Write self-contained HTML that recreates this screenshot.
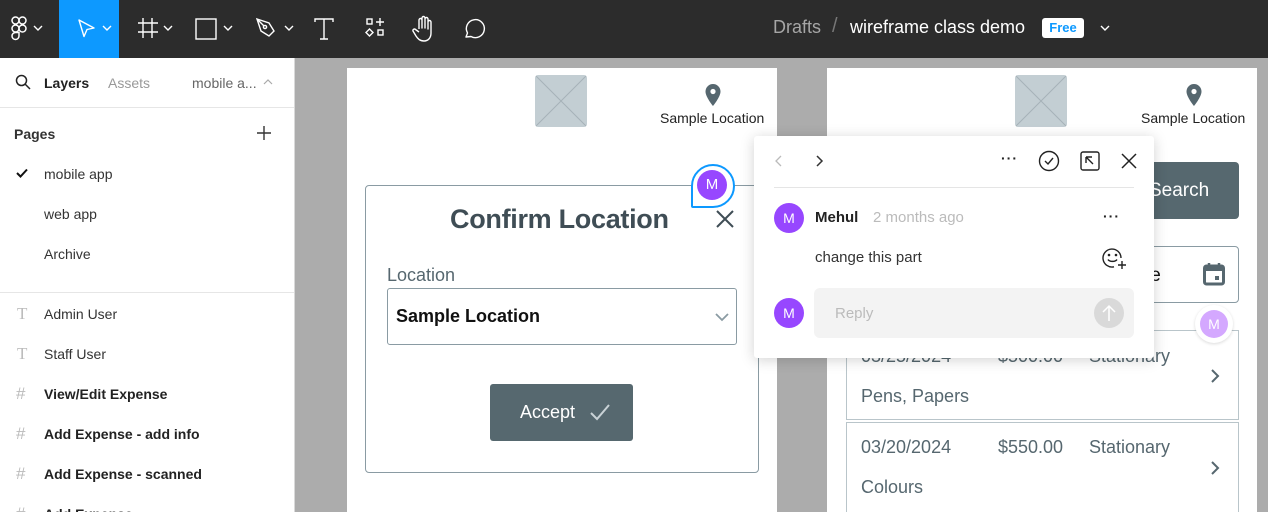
<!DOCTYPE html>
<html><head><meta charset="utf-8"><style>
*{margin:0;padding:0;box-sizing:border-box}
html,body{width:1268px;height:512px;overflow:hidden}
body{position:relative;background:#acacac;font-family:"Liberation Sans",sans-serif}
.a{position:absolute}
.top{left:0;top:0;width:1268px;height:58px;background:#2c2c2c}
.side{left:0;top:58px;width:295px;height:454px;background:#fff;border-right:1px solid #d9d9d9;overflow:hidden}
.side .t{font-size:14px;color:#333}
.b{font-weight:bold;color:#222}
.frame{background:#fff}
.rob{font-family:"Liberation Sans",sans-serif;color:#333}
svg{display:block}
</style></head><body>
<div class="a top">
 <svg class="a" style="left:10px;top:16px" width="18" height="26" viewBox="0 0 18 26" fill="none" stroke="#fff" stroke-width="1.5"><rect x="2" y="1" width="7" height="7" rx="3.5"/><rect x="9" y="1" width="7" height="7" rx="3.5"/><rect x="2" y="9" width="7" height="7" rx="3.5"/><circle cx="12.5" cy="12.5" r="3.5"/><path d="M5.5 16.5a3.5 3.5 0 1 0 3.5 3.5v-3.5z"/></svg>
 <svg class="a" style="left:33px;top:24px" width="10" height="8" viewBox="0 0 10 8"><path d="M1 2l4 4 4-4" stroke="#fff" stroke-width="1.4" fill="none"/></svg>
 <div class="a" style="left:59px;top:0;width:60px;height:58px;background:#0d99ff"></div>
 <svg class="a" style="left:76px;top:18px" width="22" height="22" viewBox="0 0 22 22"><path d="M3 2l15 8-7 1.5-3 7z" stroke="#fff" stroke-width="1.4" fill="none" stroke-linejoin="round"/></svg>
 <svg class="a" style="left:102px;top:24px" width="10" height="8" viewBox="0 0 10 8"><path d="M1 2l4 4 4-4" stroke="#fff" stroke-width="1.4" fill="none"/></svg>
 <svg class="a" style="left:137px;top:17px" width="22" height="22" viewBox="0 0 22 22" stroke="#fff" stroke-width="1.4"><path d="M6 1v20M15 1v20M1 6h20M1 15h20"/></svg>
 <svg class="a" style="left:163px;top:24px" width="10" height="8" viewBox="0 0 10 8"><path d="M1 2l4 4 4-4" stroke="#fff" stroke-width="1.4" fill="none"/></svg>
 <svg class="a" style="left:195px;top:18px" width="22" height="22" viewBox="0 0 22 22"><rect x="1" y="1" width="20" height="20" stroke="#fff" stroke-width="1.4" fill="none"/></svg>
 <svg class="a" style="left:223px;top:24px" width="10" height="8" viewBox="0 0 10 8"><path d="M1 2l4 4 4-4" stroke="#fff" stroke-width="1.4" fill="none"/></svg>
 <svg class="a" style="left:255px;top:17px" width="22" height="22" viewBox="0 0 22 22" fill="none" stroke="#fff" stroke-width="1.4"><path d="M2 2l12 4 5 8-5 5-8-5z"/><circle cx="10" cy="10" r="1.6"/><path d="M2 2l7 7"/></svg>
 <svg class="a" style="left:284px;top:24px" width="10" height="8" viewBox="0 0 10 8"><path d="M1 2l4 4 4-4" stroke="#fff" stroke-width="1.4" fill="none"/></svg>
 <svg class="a" style="left:313px;top:17px" width="22" height="24" viewBox="0 0 22 24" fill="none" stroke="#fff" stroke-width="1.4"><path d="M2 5V2h18v3M11 2v20M7 22h8"/></svg>
 <svg class="a" style="left:365px;top:17px" width="22" height="22" viewBox="0 0 22 22" fill="none" stroke="#fff" stroke-width="1.4"><rect x="2" y="2" width="5" height="5"/><path d="M15 1v8M11 5h8"/><path d="M4.5 12l3.5 3.5-3.5 3.5-3.5-3.5z"/><rect x="13" y="13" width="5" height="5"/></svg>
 <svg class="a" style="left:412px;top:15px" width="24" height="28" viewBox="0 0 24 28" fill="none" stroke="#fff" stroke-width="1.4" stroke-linejoin="round"><path d="M7 14V5a1.5 1.5 0 0 1 3 0v8V3a1.5 1.5 0 0 1 3 0v10V4a1.5 1.5 0 0 1 3 0v10V7a1.5 1.5 0 0 1 3 0v11c0 5-3 8-7 8s-6-2-8-5l-3-5a1.5 1.5 0 0 1 2.5-1.5L7 17"/></svg>
 <svg class="a" style="left:462px;top:17px" width="24" height="24" viewBox="0 0 24 24" fill="none" stroke="#fff" stroke-width="1.4"><path d="M4 20l1.5-4A9 9 0 1 1 9 19.5z" stroke-linejoin="round"/></svg>
 <div class="a" style="left:773px;top:17px;font-size:18px;color:#a6a6a6">Drafts</div>
 <div class="a" style="left:832px;top:15px;font-size:20px;color:#777">/</div>
 <div class="a" style="left:850px;top:17px;font-size:18px;color:#fff">wireframe class demo</div>
 <div class="a" style="left:1042px;top:18px;width:42px;height:20px;background:#fff;border-radius:3px;color:#0d99ff;font-size:13px;font-weight:bold;text-align:center;line-height:20px">Free</div>
 <svg class="a" style="left:1100px;top:24px" width="10" height="8" viewBox="0 0 10 8"><path d="M1 2l4 4 4-4" stroke="#fff" stroke-width="1.4" fill="none"/></svg>
</div>

<div class="a side">
 <svg class="a" style="left:15px;top:16px" width="16" height="16" viewBox="0 0 16 16" fill="none" stroke="#222" stroke-width="1.5"><circle cx="6.5" cy="6.5" r="5"/><path d="M10 10l5 5"/></svg>
 <div class="a b" style="left:44px;top:17px;font-size:14px">Layers</div>
 <div class="a" style="left:108px;top:17px;font-size:14px;color:#999">Assets</div>
 <div class="a" style="left:192px;top:17px;font-size:14px;color:#666">mobile a...</div>
 <svg class="a" style="left:263px;top:20px" width="10" height="8" viewBox="0 0 10 8"><path d="M1 6l4-4 4 4" stroke="#aaa" stroke-width="1.2" fill="none"/></svg>
 <div class="a" style="left:0;top:49px;width:294px;height:1px;background:#e6e6e6"></div>
 <div class="a b" style="left:14px;top:68px;font-size:14px;color:#333">Pages</div>
 <svg class="a" style="left:256px;top:67px" width="16" height="16" viewBox="0 0 16 16" stroke="#333" stroke-width="1.4"><path d="M8 1v14M1 8h14"/></svg>
 <svg class="a" style="left:16px;top:110px" width="12" height="10" viewBox="0 0 12 10"><path d="M1 5l3.5 3.5L11 1.5" stroke="#111" stroke-width="2" fill="none"/></svg>
 <div class="a t" style="left:44px;top:108px">mobile app</div>
 <div class="a t" style="left:44px;top:148px">web app</div>
 <div class="a t" style="left:44px;top:188px">Archive</div>
 <div class="a" style="left:0;top:234px;width:294px;height:1px;background:#e6e6e6"></div>
 <div class="a" style="left:17px;top:246px;font-size:17px;color:#bbb;font-family:'Liberation Serif',serif">T</div>
 <div class="a t" style="left:44px;top:248px">Admin User</div>
 <div class="a" style="left:17px;top:286px;font-size:17px;color:#bbb;font-family:'Liberation Serif',serif">T</div>
 <div class="a t" style="left:44px;top:288px">Staff User</div>
 <div class="a" style="left:16px;top:326px;font-size:17px;color:#bbb">#</div>
 <div class="a b" style="left:44px;top:328px;font-size:14px">View/Edit Expense</div>
 <div class="a" style="left:16px;top:366px;font-size:17px;color:#bbb">#</div>
 <div class="a b" style="left:44px;top:368px;font-size:14px">Add Expense - add info</div>
 <div class="a" style="left:16px;top:406px;font-size:17px;color:#bbb">#</div>
 <div class="a b" style="left:44px;top:408px;font-size:14px">Add Expense - scanned</div>
 <div class="a" style="left:16px;top:446px;font-size:17px;color:#bbb">#</div>
 <div class="a b" style="left:44px;top:448px;font-size:14px">Add Expense</div>
</div>

<div class="a frame" style="left:347px;top:68px;width:430px;height:444px">
 <svg class="a" style="left:188px;top:7px" width="52" height="52" viewBox="0 0 52 52"><rect width="52" height="52" rx="3" fill="#c3ced3"/><path d="M1 1l50 50M51 1L1 51" stroke="#a6b2b8" stroke-width="1"/></svg>
 <svg class="a" style="left:357px;top:15px" width="18" height="26" viewBox="0 0 18 26"><path d="M9 1a7.5 7.5 0 0 0-7.5 7.5C1.5 14 9 23 9 23s7.5-9 7.5-14.5A7.5 7.5 0 0 0 9 1z" fill="#56676f"/><circle cx="9" cy="8.5" r="2.6" fill="#fff"/></svg>
 <div class="a rob" style="left:313px;top:42px;font-size:14px;color:#222">Sample Location</div>
 <div class="a" style="left:18px;top:117px;width:394px;height:288px;border:1px solid #8a9ba3;border-radius:4px"></div>
 <div class="a" style="left:103px;top:136px;font-size:27px;font-weight:bold;color:#3f4d55;letter-spacing:-0.3px">Confirm Location</div>
 <svg class="a" style="left:369px;top:142px" width="18" height="18" viewBox="0 0 18 18" stroke="#3f4d55" stroke-width="2"><path d="M1 1l16 16M17 1L1 17"/></svg>
 <div class="a" style="left:40px;top:197px;font-size:18px;color:#56676f">Location</div>
 <div class="a" style="left:40px;top:220px;width:350px;height:57px;border:1px solid #8a9ba3;border-radius:3px"></div>
 <div class="a" style="left:49px;top:238px;font-size:18px;font-weight:bold;color:#111">Sample Location</div>
 <svg class="a" style="left:368px;top:244px" width="14" height="10" viewBox="0 0 14 10"><path d="M1 2l6 6 6-6" stroke="#8a9ba3" stroke-width="1.8" fill="none"/></svg>
 <div class="a" style="left:143px;top:316px;width:143px;height:57px;background:#56686f;border-radius:3px"></div>
 <div class="a" style="left:173px;top:334px;font-size:18px;color:#fff">Accept</div>
 <svg class="a" style="left:242px;top:335px" width="22" height="18" viewBox="0 0 22 18"><path d="M2 10l6 6L20 2" stroke="#c9d2d6" stroke-width="2" fill="none"/></svg>
</div>
<div class="a" style="left:691px;top:164px;width:44px;height:44px;background:#fff;border:2px solid #0d99ff;border-radius:22px 22px 22px 2px"></div>
<div class="a" style="left:697px;top:170px;width:30px;height:30px;border-radius:50%;background:#9747ff;color:#fff;font-size:15px;text-align:center;line-height:30px">M</div>

<div class="a frame" style="left:827px;top:68px;width:430px;height:444px">
 <svg class="a" style="left:188px;top:7px" width="52" height="52" viewBox="0 0 52 52"><rect width="52" height="52" rx="3" fill="#c3ced3"/><path d="M1 1l50 50M51 1L1 51" stroke="#a6b2b8" stroke-width="1"/></svg>
 <svg class="a" style="left:358px;top:15px" width="18" height="26" viewBox="0 0 18 26"><path d="M9 1a7.5 7.5 0 0 0-7.5 7.5C1.5 14 9 23 9 23s7.5-9 7.5-14.5A7.5 7.5 0 0 0 9 1z" fill="#56676f"/><circle cx="9" cy="8.5" r="2.6" fill="#fff"/></svg>
 <div class="a rob" style="left:314px;top:42px;font-size:14px;color:#222">Sample Location</div>
 <div class="a" style="left:300px;top:94px;width:112px;height:57px;background:#56686f;border-radius:4px"></div>
 <div class="a" style="left:322px;top:112px;font-size:19px;color:#fff">Search</div>
 <div class="a" style="left:300px;top:178px;width:112px;height:57px;border:1px solid #8a9ba3;border-radius:4px"></div>
 <div class="a" style="left:318px;top:197px;font-size:19px;color:#111">te</div>
 <svg class="a" style="left:376px;top:194px" width="22" height="24" viewBox="0 0 22 24"><rect x="1.5" y="4" width="19" height="18" rx="2" fill="none" stroke="#56676f" stroke-width="3"/><rect x="1.5" y="4" width="19" height="5" fill="#56676f"/><path d="M6 1v4M16 1v4" stroke="#56676f" stroke-width="2.5"/><rect x="12" y="14" width="4" height="4" fill="#56676f"/></svg>
 <div class="a" style="left:19px;top:262px;width:393px;height:90px;border:1px solid #b9c5ca"></div>
 <div class="a" style="left:19px;top:354px;width:393px;height:92px;border:1px solid #b9c5ca"></div>
 <div class="a" style="left:34px;top:278px;font-size:18px;color:#56676f">03/25/2024</div>
 <div class="a" style="left:171px;top:278px;font-size:18px;color:#56676f">$500.00</div>
 <div class="a" style="left:262px;top:278px;font-size:18px;color:#56676f">Stationary</div>
 <div class="a" style="left:34px;top:318px;font-size:18px;color:#56676f">Pens, Papers</div>
 <div class="a" style="left:34px;top:369px;font-size:18px;color:#56676f">03/20/2024</div>
 <div class="a" style="left:171px;top:369px;font-size:18px;color:#56676f">$550.00</div>
 <div class="a" style="left:262px;top:369px;font-size:18px;color:#56676f">Stationary</div>
 <div class="a" style="left:34px;top:409px;font-size:18px;color:#56676f">Colours</div>
 <svg class="a" style="left:383px;top:300px" width="10" height="16" viewBox="0 0 10 16"><path d="M2 2l6 6-6 6" stroke="#56676f" stroke-width="2" fill="none"/></svg>
 <svg class="a" style="left:383px;top:392px" width="10" height="16" viewBox="0 0 10 16"><path d="M2 2l6 6-6 6" stroke="#56676f" stroke-width="2" fill="none"/></svg>
</div>
<div class="a" style="left:1195px;top:305px;width:38px;height:38px;border-radius:50%;background:#fff;box-shadow:0 1px 3px rgba(0,0,0,.15)"></div>
<div class="a" style="left:1200px;top:310px;width:28px;height:28px;border-radius:50%;background:#d4a8ff;color:#fff;font-size:14px;text-align:center;line-height:28px">M</div>

<div class="a" style="left:754px;top:136px;width:400px;height:222px;background:#fff;border-radius:3px;box-shadow:0 2px 14px rgba(0,0,0,.18)">
 <svg class="a" style="left:20px;top:18px" width="10" height="14" viewBox="0 0 10 14"><path d="M7 2L2 7l5 5" stroke="#bbb" stroke-width="1.3" fill="none"/></svg>
 <svg class="a" style="left:60px;top:18px" width="10" height="14" viewBox="0 0 10 14"><path d="M3 2l5 5-5 5" stroke="#333" stroke-width="1.5" fill="none"/></svg>
 <div class="a" style="left:247px;top:14px;font-size:14px;color:#222;font-weight:bold;letter-spacing:1px">···</div>
 <svg class="a" style="left:284px;top:14px" width="22" height="22" viewBox="0 0 22 22" fill="none" stroke="#222" stroke-width="1.4"><circle cx="11" cy="11" r="9.5"/><path d="M7 11l3 3 5-6"/></svg>
 <svg class="a" style="left:325px;top:14px" width="22" height="22" viewBox="0 0 22 22" fill="none" stroke="#222" stroke-width="1.4"><rect x="2" y="2" width="18" height="18" rx="2"/><path d="M7 7l7 7M7 7v6M7 7h6"/></svg>
 <svg class="a" style="left:367px;top:17px" width="16" height="16" viewBox="0 0 16 16" stroke="#222" stroke-width="1.5"><path d="M1 1l14 14M15 1L1 15"/></svg>
 <div class="a" style="left:20px;top:51px;width:360px;height:1px;background:#e5e5e5"></div>
 <div class="a" style="left:20px;top:67px;width:30px;height:30px;border-radius:50%;background:#9747ff;color:#fff;font-size:14px;text-align:center;line-height:30px">M</div>
 <div class="a" style="left:61px;top:73px;font-size:15px;font-weight:bold;color:#222">Mehul</div>
 <div class="a" style="left:119px;top:73px;font-size:15px;color:#bbb">2 months ago</div>
 <div class="a" style="left:349px;top:72px;font-size:14px;color:#222;font-weight:bold;letter-spacing:1px">···</div>
 <div class="a" style="left:61px;top:113px;font-size:15px;color:#333">change this part</div>
 <svg class="a" style="left:348px;top:110px" width="26" height="26" viewBox="0 0 26 26" fill="none" stroke="#222" stroke-width="1.4"><path d="M19 12a9 9 0 1 0-7 8.8"/><circle cx="7" cy="9" r=".6" fill="#222"/><circle cx="14" cy="9" r=".6" fill="#222"/><path d="M6 13.5c1.5 2.5 7.5 2.5 9 0M20 15v8M16 19h8"/></svg>
 <div class="a" style="left:20px;top:162px;width:30px;height:30px;border-radius:50%;background:#9747ff;color:#fff;font-size:14px;text-align:center;line-height:30px">M</div>
 <div class="a" style="left:60px;top:152px;width:320px;height:50px;background:#f3f3f3;border-radius:6px"></div>
 <div class="a" style="left:81px;top:169px;font-size:15px;color:#bbb">Reply</div>
 <div class="a" style="left:340px;top:162px;width:30px;height:30px;border-radius:50%;background:#d9d9d9"></div>
 <svg class="a" style="left:348px;top:168px" width="14" height="18" viewBox="0 0 14 18" stroke="#fff" stroke-width="1.5" fill="none"><path d="M7 17V2M1 8l6-6 6 6"/></svg>
</div>
</body></html>
